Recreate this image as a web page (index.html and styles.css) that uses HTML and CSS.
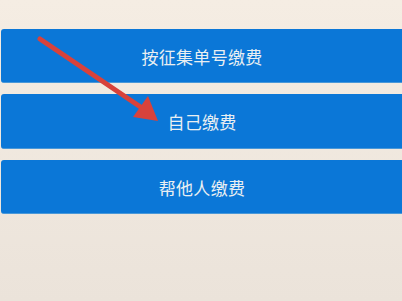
FILE: index.html
```html
<!DOCTYPE html>
<html>
<head>
    <meta charset="utf-8">
    <meta name="viewport" content="width=device-width, initial-scale=1">
    <title>缴费</title>

    <link rel="stylesheet" href="styles.css">

</head>
<body>
    <div class="pay-list">
        <button class="pay-btn">按征集单号缴费</button>
        <button class="pay-btn">自己缴费</button>
        <button class="pay-btn">帮他人缴费</button>
    </div>

    <svg class="arrow" width="402" height="301" viewBox="0 0 402 301">
        <line x1="40" y1="39" x2="145" y2="110" stroke="#d8423b" stroke-width="5" stroke-linecap="round"/>
        <polygon points="158,121 133,117 148,96" fill="#d8423b"/>
    </svg>
</body>
</html>
```

FILE: styles.css
```css
body {
    margin: 0;
    height: 301px;
    overflow: hidden;
    background: linear-gradient(#f5ede3, #ebe3da);
    font-family: "Noto Sans CJK SC", "Noto Sans", sans-serif;
}
.pay-list {
    display: flex;
    flex-direction: column;
    gap: 11px;
    padding: 29px 0 0 1px;
}
.pay-btn {
    width: 410px;
    height: 54px;
    padding: 1px 8px 0 0;
    background-color: #0b77d7;
    color: #e9eff2;
    font-family: inherit;
    font-size: 17px;
    letter-spacing: 0.3px;
    text-align: center;
    border: none;
    border-bottom: 1px solid #4a98d8;
    border-radius: 3px;
}
.pay-btn:nth-child(2) {
    height: 55px;
}
.arrow {
    position: absolute;
    top: 0;
    left: 0;
}
```
